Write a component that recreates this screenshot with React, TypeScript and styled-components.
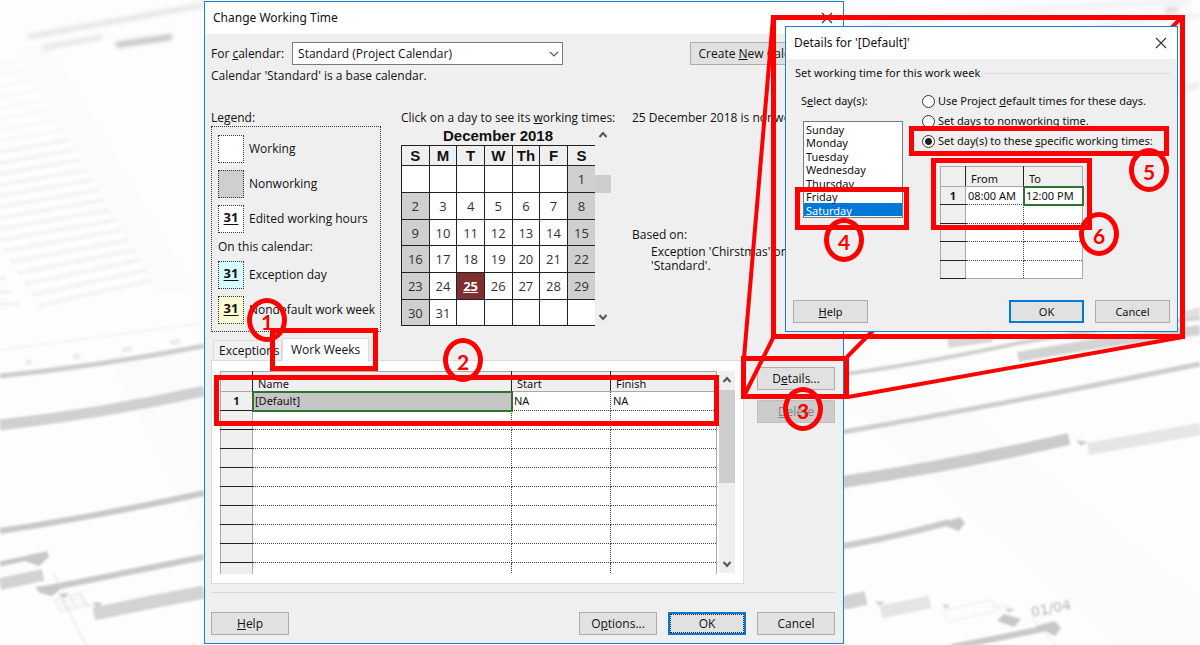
import React from 'react';
import styled, { createGlobalStyle, css } from 'styled-components';

const RED = '#ff0000';
const FACE = '#efefef';
const BLUE = '#0078d7';

const Global = createGlobalStyle`
  *, *::before, *::after { box-sizing: border-box; }
  body {
    margin: 0;
    background: #fdfdfd;
    color: #111;
    font-family: "Noto Sans", "Open Sans", sans-serif;
    font-size: 11px;
    line-height: 16px;
  }
  button, select, input { font: inherit; color: inherit; margin: 0; }
  fieldset { border: 0; margin: 0; padding: 0; min-width: 0; }
  h1, h2, p { margin: 0; font-size: inherit; font-weight: 400; }
`;

/* ---------- desktop and windows ---------- */

const Desktop = styled.main`
  position: relative;
  min-height: 100vh;
  overflow: hidden;
`;

const Backdrop = styled.svg`
  position: absolute;
  inset: 0;
  width: 100%;
  height: 100%;
`;

const Overlay = styled.svg`
  position: absolute;
  left: 0;
  top: 0;
  overflow: visible;
  pointer-events: none;
`;

const Window = styled.section<{ $x: number; $y: number; $w: number }>`
  position: absolute;
  left: ${p => p.$x}px;
  top: ${p => p.$y}px;
  width: ${p => p.$w}px;
  border: 1px solid #1c7fd0;
  background: ${FACE};
`;

const TitleBar = styled.header`
  display: flex;
  align-items: center;
  justify-content: space-between;
  height: 32px;
  padding: 0 10px 0 8px;
  background: #fff;
  font-size: 12px;
`;

const CloseButton = styled.button`
  display: flex;
  padding: 0;
  border: 0;
  background: none;
`;

const PushButton = styled.button<{ $primary?: boolean; $w: number }>`
  flex: none;
  width: ${p => p.$w}px;
  height: 23px;
  padding: 0;
  border: 1px solid #adadad;
  background: #e1e1e1;
  white-space: nowrap;
  ${p => p.$primary && css`border: 2px solid ${BLUE};`}
  &:disabled { background: #cccccc; border-color: #bfbfbf; color: #838383; }
`;

const FocusRing = styled.span`
  display: block;
  border: 1px dotted #222;
  line-height: 17px;
`;

/* ---------- main window ---------- */

const MainBody = styled.div`
  display: flex;
  flex-direction: column;
  padding: 8px 8px 8px 6px;
  font-family: "Open Sans", "Noto Sans", sans-serif;
  font-size: 12px;
`;

const CalendarRow = styled.div`
  display: flex;
  align-items: center;
  justify-content: space-between;
`;

const ComboLabel = styled.label`
  display: flex;
  align-items: center;
  gap: 8px;
`;

const Combo = styled.span`
  display: flex;
  align-items: center;
  position: relative;
  width: 271px;
  svg { position: absolute; right: 4px; pointer-events: none; }
`;

const ComboSelect = styled.select`
  appearance: none;
  width: 100%;
  height: 23px;
  padding: 0 20px 0 5px;
  border: 1px solid #7a7a7a;
  border-radius: 0;
  background: #fff;
`;

const BaseNote = styled.p`
  margin: 3px 0 26px;
`;

const Columns = styled.div`
  display: grid;
  grid-template-columns: 170px 211px 1fr;
  column-gap: 20px;
  white-space: nowrap;
`;

const LegendBox = styled.div`
  display: flex;
  flex-direction: column;
  height: 206px;
  padding: 8px 6px;
  border: 1px dotted #333;
`;

const LegendItem = styled.div`
  display: flex;
  align-items: center;
  gap: 5px;
  & + & { margin-top: 7px; }
`;

const LegendCaption = styled.p`
  line-height: 28px;
`;

const Swatch = styled.span<{ $bg: string }>`
  flex: none;
  width: 26px;
  height: 28px;
  border: 1px dotted #333;
  background: ${p => p.$bg};
  font-size: 13px;
  font-weight: 700;
  line-height: 22px;
  text-align: center;
  text-decoration: underline;
  text-underline-offset: 2px;
`;

const MonthArea = styled.div`
  display: flex;
  height: 200px;
`;

const Month = styled.table`
  width: 194px;
  table-layout: fixed;
  border-collapse: collapse;
  text-align: center;
  font-size: 13px;
  color: #333;
  caption {
    height: 19px;
    font: 700 15px/20px "Liberation Sans", Arial, sans-serif;
    color: #111;
  }
  th, td { padding: 0; border: 1px solid #222; }
  th:last-child, td:last-child { border-right: 0; }
  th {
    height: 20px;
    font: 700 15px/18px "Liberation Sans", Arial, sans-serif;
    color: #111;
  }
  tbody tr { height: 27px; }
  tbody tr:nth-child(3n) { height: 26px; }
`;

const Day = styled.td<{ $off: boolean; $selected: boolean }>`
  line-height: 18px;
  background: ${p => (p.$off ? '#cfcfcf' : '#fff')};
  ${p => p.$selected && css`
    background: repeating-conic-gradient(#5c1c1c 0 25%, #a04444 0 50%) 0 0 / 2px 2px;
    color: #fff;
    font-weight: 700;
    text-decoration: underline;
  `}
`;

const ScrollTrack = styled.div<{ $lead: number }>`
  display: flex;
  flex-direction: column;
  align-items: center;
  width: 16px;
  background: ${FACE};
  svg:first-child { margin-bottom: ${p => p.$lead}px; }
  svg:last-child { margin-top: auto; }
`;

const Thumb = styled.span<{ $h: number }>`
  width: 16px;
  height: ${p => p.$h}px;
  background: #cdcdcd;
`;

const Info = styled.div`
  display: flex;
  flex-direction: column;
`;

const BasedOn = styled.p`
  margin-top: 101px;
`;

const BasedText = styled.p`
  margin-top: 2px;
  padding-left: 19px;
  line-height: 14px;
`;

const Lower = styled.div`
  display: flex;
  justify-content: space-between;
  margin-top: 6px;
`;

const TabGroup = styled.div`
  width: 533px;
`;

const TabList = styled.div`
  display: flex;
  align-items: flex-end;
  height: 22px;
  padding-left: 2px;
`;

const Tab = styled.button<{ $active?: boolean }>`
  height: 20px;
  padding: 0 5px;
  border: 1px solid #dcdcdc;
  border-bottom: 0;
  background: #f1f1f1;
  width: 69px;
  text-align: left;
  white-space: nowrap;
  ${p => p.$active && css`
    position: relative;
    height: 23px;
    width: 87px;
    padding: 0 8px;
    margin-bottom: -1px;
    background: #fff;
  `}
`;

const TabPanel = styled.div`
  display: flex;
  justify-content: space-between;
  height: 224px;
  padding: 10px 8px;
  border: 1px solid #dcdcdc;
  background: #fff;
`;

const SheetClip = styled.div`
  height: 203px;
  overflow: hidden;
`;

const Sheet = styled.table<{ $w: number; $row: number }>`
  width: ${p => p.$w}px;
  table-layout: fixed;
  border-collapse: collapse;
  white-space: nowrap;
  border: 1px solid #a8a8a8;
  font-family: "Noto Sans", "Open Sans", sans-serif;
  font-size: 11px;
  thead tr { height: 20px; background: ${FACE}; }
  thead th {
    padding: 4px 0 0 5px;
    border-right: 1px solid #222;
    border-bottom: 1px solid #a8a8a8;
    font-weight: 400;
    line-height: 14px;
    text-align: left;
  }
  thead th:last-child { border-right-color: #a8a8a8; }
  tbody tr { height: ${p => p.$row}px; }
  tbody tr:nth-child(even) { height: 19px; }
  tbody th {
    padding: 0;
    border-right: 1px solid #a8a8a8;
    border-bottom: 1px solid #222;
    background: ${FACE};
    font-weight: 700;
    line-height: 14px;
  }
  tbody td {
    padding: 0 2px;
    border-right: 1px dotted #444;
    border-bottom: 1px dotted #444;
    background: #fff;
    line-height: 14px;
  }
  tbody td:last-child { border-right: 1px solid #a8a8a8; }
`;

const ActiveCell = styled.td<{ $fill: string }>`
  && {
    background: ${p => p.$fill};
    outline: 2px solid #2e7430;
    outline-offset: -1px;
  }
`;

const SideButtons = styled.div`
  display: flex;
  flex-direction: column;
  gap: 10px;
  padding-top: 29px;
`;

const ButtonRow = styled.div`
  display: flex;
  gap: 11px;
  button:first-child { margin-right: auto; }
`;

const Footer = styled(ButtonRow)`
  margin-top: 8px;
  padding-top: 19px;
  border-top: 1px solid #d8d8d8;
`;

/* ---------- details window ---------- */

const DetailsBody = styled.div`
  display: flex;
  flex-direction: column;
  padding: 6px 7px 8px;
`;

const GroupHead = styled.div`
  display: flex;
  align-items: center;
  gap: 4px;
  padding-left: 2px;
  &::after { content: ""; flex: 1; border-top: 1px solid #dcdcdc; }
`;

const DetailsColumns = styled.div`
  display: flex;
  gap: 19px;
  height: 207px;
  margin-top: 12px;
  padding-left: 10px;
  white-space: nowrap;
`;

const DayPicker = styled.div`
  display: flex;
  flex-direction: column;
  width: 100px;
  gap: 12px;
  label { margin-left: -2px; }
`;

const DayList = styled.select`
  height: 97px;
  padding: 0;
  border: 1px solid #7a7a7a;
  border-radius: 0;
  background: #fff;
  overflow: hidden;
  scrollbar-width: none;
  outline: 0;
  option {
    height: 13px;
    min-height: 13px;
    padding: 0 2px;
    line-height: 13px;
  }
  option:nth-child(even) { height: 14px; }
  option:checked {
    background: ${BLUE} linear-gradient(${BLUE}, ${BLUE});
    color: #fff;
    -webkit-text-fill-color: #fff;
  }
`;

const RadioGroup = styled.fieldset`
  display: flex;
  flex-direction: column;
  gap: 4px;
`;

const RadioLabel = styled.label`
  display: flex;
  align-items: center;
  gap: 3px;
`;

const Radio = styled.input`
  appearance: none;
  flex: none;
  width: 13px;
  height: 13px;
  border: 1px solid #333;
  border-radius: 50%;
  background: #fff;
  &:checked { background: radial-gradient(circle, #222 0 3px, #fff 4px); }
`;

const TimesWrap = styled.div`
  margin: 17px 0 0 18px;
`;

/* ---------- call-outs ---------- */

const Frame = styled.div<{ $x: number; $y: number; $w: number; $h: number }>`
  position: absolute;
  left: ${p => p.$x}px;
  top: ${p => p.$y}px;
  width: ${p => p.$w}px;
  height: ${p => p.$h}px;
  border: 5px solid ${RED};
  pointer-events: none;
`;

const Step = styled.div<{ $x: number; $y: number }>`
  position: absolute;
  left: ${p => p.$x}px;
  top: ${p => p.$y}px;
  display: flex;
  align-items: center;
  justify-content: center;
  width: 40px;
  height: 44px;
  padding-top: 4px;
  border: 5px solid ${RED};
  border-radius: 50%;
  color: ${RED};
  font: 700 21px/24px Lato, sans-serif;
  pointer-events: none;
`;

/* ---------- glyphs ---------- */

const CloseIcon = () => (
  <svg width="12" height="12" viewBox="0 0 12 12" fill="none" stroke="#333" strokeWidth="1.1">
    <path d="M1 1l10 10M11 1L1 11" />
  </svg>
);

const Chevron = () => (
  <svg width="10" height="6" viewBox="0 0 10 6" fill="none" stroke="#555" strokeWidth="1.1">
    <path d="M1 1l4 4 4-4" />
  </svg>
);

const Arrow = ({ up }: { up?: boolean }) => (
  <svg width="16" height="17" viewBox="0 0 16 17" fill="none" stroke="#555" strokeWidth="2">
    <path d={up ? 'M4.500 11l3.500-4 3.500 4' : 'M4.500 6l3.500 4 3.500-4'} />
  </svg>
);

/* ---------- data ---------- */

const weekDays = ['S', 'M', 'T', 'W', 'Th', 'F', 'S'];
const weeks = Array.from({ length: 6 }, (_, w) =>
  Array.from({ length: 7 }, (_, d) => {
    const n = w * 7 + d - 5;
    return n >= 1 && n <= 31 ? n : null;
  }),
);

const legendTop = [
  { bg: '#fff', mark: '', label: 'Working' },
  { bg: '#cfcfcf', mark: '', label: 'Nonworking' },
  { bg: '#fff', mark: '31', label: 'Edited working hours' },
];
const legendBottom = [
  { bg: '#d5fbff', mark: '31', label: 'Exception day' },
  { bg: '#ffffd5', mark: '31', label: 'Nondefault work week' },
];

const dayNames = ['Sunday', 'Monday', 'Tuesday', 'Wednesday', 'Thursday', 'Friday', 'Saturday'];

const frames = [
  [270, 328, 108, 43],
  [214, 375, 505, 51],
  [741, 356, 108, 43],
  [795, 187, 114, 43],
  [909, 126, 260, 30],
  [931, 158, 161, 72],
  [771, 15, 414, 324],
];
const steps = [
  [247, 298],
  [443, 338],
  [783, 387],
  [824, 218],
  [1129, 148],
  [1079, 212],
];

/* Soft grey Gantt chart seen in perspective behind the windows. */
const GanttBackdrop = () => (
  <Backdrop viewBox="0 0 1200 645" preserveAspectRatio="xMidYMid slice" aria-hidden="true">
    <defs>
      <filter id="soft" x="-5%" y="-5%" width="110%" height="110%"><feGaussianBlur stdDeviation="0.8" /></filter>
      <filter id="softer" x="-10%" y="-50%" width="120%" height="200%"><feGaussianBlur stdDeviation="2" /></filter>
    </defs>
    <rect width="1200" height="645" fill="#fdfdfd" />
    <path d="M15 50L48 42 195 290 155 292zM112 366L204 350V540zM843 400L930 380 1200 600V645H1120z" fill="#fbfbfb" />
    <g filter="url(#softer)" fill="none">
      <path d="M28 37L110 22 204 5" stroke="#e4e4e4" strokeWidth="5" />
      <path d="M42 48L102 37" stroke="#e6e6e6" strokeWidth="5" />
      <path d="M116 45L172 37" stroke="#c6c6c6" strokeWidth="6" />
      <path d="M844 30Q1000 6 1190 2M1060 35Q1120 20 1200 16" stroke="#f2f2f2" strokeWidth="6" />
      <path d="M1165 11L1178 9" stroke="#dcdcdc" strokeWidth="6" />
      <path d="M1180 90L1200 84M844 88L870 80" stroke="#eaeaea" strokeWidth="5" />
    </g>
    <g filter="url(#soft)" stroke="#f1f1f1" strokeWidth="4" strokeDasharray="5 1 3 1 4 1">
      {Array.from({ length: 23 }, (_, i) => (
        <path
          key={i}
          d={`M${Math.max(0, i * 7 - 115)} ${64 + i * 11}L${20 + i * 6} ${60 + i * 10}`}
          opacity={i < 8 ? 0.4 : 0.9}
        />
      ))}
      <path d="M0 278h6M0 292h12M0 304h20" />
    </g>
    <g filter="url(#soft)" fill="none">
      <path d="M0 350L204 323" stroke="#f3f3f3" strokeWidth="2" />
      <path d="M26 363l6-1M73 357l7-1M122 350l10-2M170 343l10-2" stroke="#ececec" strokeWidth="5" />
      <path d="M0 376Q100 366 204 346" stroke="#cfcfcf" strokeWidth="5" />
      <path d="M0 425Q100 414 204 391" stroke="#d0d0d0" strokeWidth="11" />
      <path d="M0 531Q100 516 204 493" stroke="#c9c9c9" strokeWidth="6" />
      <path d="M0 584L43 575" stroke="#d2d2d2" strokeWidth="12" />
      <path d="M0 564L46 554" stroke="#c8c8c8" strokeWidth="5" />
      <path d="M22 560L47 551 49 557 39 566z" fill="#c8c8c8" />
      <path d="M50 588L204 557" stroke="#c9c9c9" strokeWidth="6" />
      <path d="M35 587L62 583 62 588 52 596 40 593z" fill="#c8c8c8" />
      <path d="M94 614Q150 602 204 592" stroke="#d3d3d3" strokeWidth="13" />
      <path d="M55 600l26-7 6 12-26 7zM54 574l9 18M84 605h14M60 594l26 51" stroke="#ddd" strokeWidth="1" />
      <path d="M59 603l24-6M61 608l24-6M62 598l6 12M70 596l6 12" stroke="#e2e2e2" strokeWidth="1" />
      <path d="M93 602l10 1-6 5zM58 594l11-1-5 5z" fill="#ccc" />
      <path d="M846 374Q930 362 1000 347T1200 318" stroke="#d0d0d0" strokeWidth="4" />
      <path d="M948 343L992 337" stroke="#d8d8d8" strokeWidth="10" />
      <path d="M1018 357Q1100 342 1200 330" stroke="#d3d3d3" strokeWidth="10" />
      <path d="M1185 315L1200 311" stroke="#e0e0e0" strokeWidth="8" />
      <path d="M843 432Q1000 405 1200 364" stroke="#cdcdcd" strokeWidth="5" />
      <path d="M843 482Q960 464 1069 439" stroke="#cbcbcb" strokeWidth="12" />
      <path d="M1088 449L1200 429" stroke="#e6e6e6" strokeWidth="12" />
      <path d="M1076 440l12 2-7 4z" fill="#ccc" />
      <path d="M843 546Q890 538 950 522" stroke="#cacaca" strokeWidth="6" />
      <path d="M940 524L960 517 965 523 959 531z" fill="#c8c8c8" />
      <path d="M843 603L866 598" stroke="#d2d2d2" strokeWidth="14" />
      <path d="M881 612L930 602" stroke="#e4e4e4" strokeWidth="13" />
      <path d="M941 611l50-11 8 10-50 12zM990 606h20M1030 616l26 29" stroke="#e8e8e8" strokeWidth="1" />
      <path d="M875 601l10 1-6 4zM942 604l8 1-4 4zM1005 608l10 1-6 4z" fill="#d0d0d0" />
      <path d="M997 621L1004 614 1021 619 1014 627z" fill="#c8c8c8" />
      <path d="M952 647Q1010 636 1046 628" stroke="#c9c9c9" strokeWidth="6" />
      <path d="M1036 626L1055 621 1061 628 1055 636z" fill="#c8c8c8" />
    </g>
    <text
      x="1032" y="617" transform="rotate(-11 1032 617)" fill="#b4b4b4"
      fontFamily="DejaVu Sans, sans-serif" fontSize="14" filter="url(#soft)"
    >
      01/04
    </text>
  </Backdrop>
);

const Legend = ({ items }: { items: typeof legendTop }) => (
  <>
    {items.map(i => (
      <LegendItem key={i.label}>
        <Swatch $bg={i.bg}>{i.mark}</Swatch>
        {i.label}
      </LegendItem>
    ))}
  </>
);

const MainWindow = () => (
  <Window $x={204} $y={1} $w={640}>
    <TitleBar>
      <h1>Change Working Time</h1>
      <CloseButton aria-label="Close"><CloseIcon /></CloseButton>
    </TitleBar>
    <MainBody>
      <CalendarRow>
        <ComboLabel>
          <span>For <u>c</u>alendar:</span>
          <Combo>
            <ComboSelect defaultValue="standard">
              <option value="standard">Standard (Project Calendar)</option>
            </ComboSelect>
            <Chevron />
          </Combo>
        </ComboLabel>
        <PushButton $w={145}>Create <u>N</u>ew Calendar...</PushButton>
      </CalendarRow>
      <BaseNote>Calendar 'Standard' is a base calendar.</BaseNote>

      <Columns>
        <div>
          <p>Legend:</p>
          <LegendBox>
            <Legend items={legendTop} />
            <LegendCaption>On this calendar:</LegendCaption>
            <Legend items={legendBottom} />
          </LegendBox>
        </div>
        <div>
          <p>Click on a day to see its <u>w</u>orking times:</p>
          <MonthArea>
            <Month>
              <caption>December 2018</caption>
              <thead>
                <tr>{weekDays.map((d, i) => <th key={i} scope="col">{d}</th>)}</tr>
              </thead>
              <tbody>
                {weeks.map((week, w) => (
                  <tr key={w}>
                    {week.map((n, d) => (
                      <Day key={d} $off={n !== null && (d === 0 || d === 6)} $selected={n === 25}>{n}</Day>
                    ))}
                  </tr>
                ))}
              </tbody>
            </Month>
            <ScrollTrack $lead={32}>
              <Arrow up />
              <Thumb $h={18} />
              <Arrow />
            </ScrollTrack>
          </MonthArea>
        </div>
        <Info>
          <p>25 December 2018 is nonworking.</p>
          <BasedOn>Based on:</BasedOn>
          <BasedText>Exception 'Chirstmas' on calendar<br />'Standard'.</BasedText>
        </Info>
      </Columns>

      <Lower>
        <TabGroup>
          <TabList role="tablist">
            <Tab role="tab" aria-selected="false">Exceptions</Tab>
            <Tab role="tab" aria-selected="true" $active>Work Weeks</Tab>
          </TabList>
          <TabPanel role="tabpanel">
            <SheetClip>
              <Sheet $w={497} $row={19}>
                <colgroup>
                  <col style={{ width: 32 }} />
                  <col />
                  <col style={{ width: 99 }} />
                  <col style={{ width: 106 }} />
                </colgroup>
                <thead>
                  <tr><th aria-label="Row" /><th>Name</th><th>Start</th><th>Finish</th></tr>
                </thead>
                <tbody>
                  <tr><th>1</th><ActiveCell $fill="#c6c6c6">[Default]</ActiveCell><td>NA</td><td>NA</td></tr>
                  {Array.from({ length: 9 }, (_, i) => <tr key={i}><th /><td /><td /><td /></tr>)}
                </tbody>
              </Sheet>
            </SheetClip>
            <ScrollTrack $lead={2}>
              <Arrow up />
              <Thumb $h={93} />
              <Arrow />
            </ScrollTrack>
          </TabPanel>
        </TabGroup>
        <SideButtons>
          <PushButton $w={78}>D<u>e</u>tails...</PushButton>
          <PushButton $w={78} disabled><u>D</u>elete</PushButton>
        </SideButtons>
      </Lower>

      <Footer>
        <PushButton $w={78}><u>H</u>elp</PushButton>
        <PushButton $w={78}>O<u>p</u>tions...</PushButton>
        <PushButton $w={78} $primary><FocusRing>OK</FocusRing></PushButton>
        <PushButton $w={78}>Cancel</PushButton>
      </Footer>
    </MainBody>
  </Window>
);

const DetailsWindow = () => (
  <Window $x={785} $y={26} $w={393}>
    <TitleBar>
      <h2>Details for '[Default]'</h2>
      <CloseButton aria-label="Close"><CloseIcon /></CloseButton>
    </TitleBar>
    <DetailsBody>
      <GroupHead>Set working time for this work week</GroupHead>
      <DetailsColumns>
        <DayPicker>
          <label htmlFor="days">S<u>e</u>lect day(s):</label>
          <DayList id="days" size={7} defaultValue="Saturday">
            {dayNames.map(d => <option key={d}>{d}</option>)}
          </DayList>
        </DayPicker>
        <div>
          <RadioGroup>
            <RadioLabel>
              <Radio type="radio" name="mode" />
              <span>Use Project <u>d</u>efault times for these days.</span>
            </RadioLabel>
            <RadioLabel>
              <Radio type="radio" name="mode" />
              <span><u>S</u>et days to nonworking time.</span>
            </RadioLabel>
            <RadioLabel>
              <Radio type="radio" name="mode" defaultChecked />
              <span>Set day(s) to these <u>s</u>pecific working times:</span>
            </RadioLabel>
          </RadioGroup>
          <TimesWrap>
            <Sheet $w={143} $row={18}>
              <colgroup>
                <col style={{ width: 25 }} />
                <col />
                <col style={{ width: 59 }} />
              </colgroup>
              <thead>
                <tr><th aria-label="Row" /><th>From</th><th>To</th></tr>
              </thead>
              <tbody>
                <tr><th>1</th><td>08:00 AM</td><ActiveCell $fill="#fff">12:00 PM</ActiveCell></tr>
                {Array.from({ length: 4 }, (_, i) => <tr key={i}><th /><td /><td /></tr>)}
              </tbody>
            </Sheet>
          </TimesWrap>
        </div>
      </DetailsColumns>
      <ButtonRow>
        <PushButton $w={75}><u>H</u>elp</PushButton>
        <PushButton $w={75} $primary>OK</PushButton>
        <PushButton $w={75}>Cancel</PushButton>
      </ButtonRow>
    </DetailsBody>
  </Window>
);

export default function App() {
  return (
    <>
      <Global />
      <Desktop>
        <GanttBackdrop />
        <MainWindow />
        <Overlay width="1200" height="645" stroke={RED} strokeWidth="4" aria-hidden="true">
          <path d="M773 18L744 358M1182 17L846 358M773 338L744 396M1183 337L848 397" />
        </Overlay>
        <DetailsWindow />
        {frames.map(([x, y, w, h]) => <Frame key={`${x}-${y}`} $x={x} $y={y} $w={w} $h={h} />)}
        {steps.map(([x, y], i) => <Step key={i} $x={x} $y={y}>{i + 1}</Step>)}
      </Desktop>
    </>
  );
}
